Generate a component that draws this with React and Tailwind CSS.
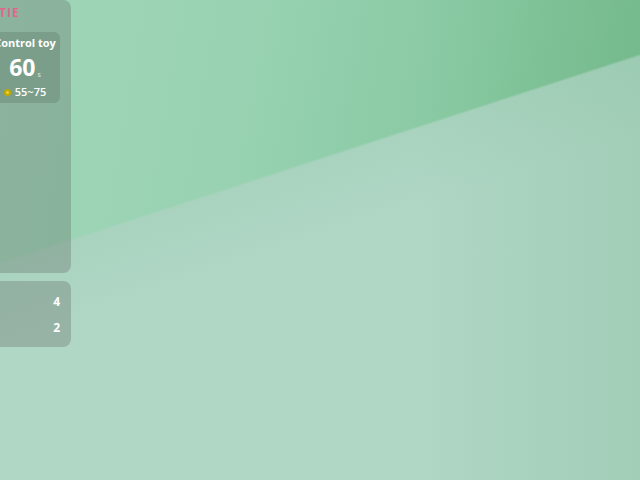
export default function App() {
  return (
    <div
      className="w-[640px] h-[480px] overflow-hidden bg-[image:linear-gradient(90deg,transparent_65%,rgba(110,175,135,0.22)_100%),linear-gradient(162deg,transparent_38%,#a9d3bf_38.4%,#b0d6c5_50%,#b0d6c5_100%),linear-gradient(100deg,#a0d6b9_0%,#98d2b2_35%,#88c9a2_65%,#70b884_100%)]"
      style={{ fontFamily: '"Open Sans", "Noto Sans", sans-serif' }}
    >
      <div className="flex flex-col gap-[8px] -ml-[21px] w-[92px]">
        <div className="h-[273px] rounded-lg bg-[rgba(95,105,100,0.32)] flex flex-col items-end pr-[11px]">
          <div className="w-[81px] -mr-[11px] pt-[5px] h-[32px] pl-[9px]">
            <div className="text-[12px] font-bold leading-[16px] text-[#e0668c] tracking-[1px]">
              TIE
            </div>
          </div>
          <div className="w-[70px] h-[71px] rounded-md bg-[rgba(70,85,78,0.22)] flex flex-col items-center pt-[3px] text-white">
            <div className="text-[11px] font-bold leading-[16px] whitespace-nowrap">Control toy</div>
            <div className="flex items-end leading-none mt-[5px]">
              <span className="text-[23px] font-bold leading-[23px]">60</span>
              <span className="text-[7px] leading-[9px] ml-[2px] text-white/80">s</span>
            </div>
            <div className="flex items-center gap-[4px] mt-[6px]">
              <span className="w-[7px] h-[7px] rounded-full bg-[#e8d630] border-[2px] border-[#c2a800]" />
              <span className="text-[11px] leading-[14px] font-semibold">55~75</span>
            </div>
          </div>
        </div>
        <div className="h-[66px] rounded-lg bg-[rgba(95,105,100,0.32)] flex flex-col items-end pr-[11px] pt-[13px] gap-[11px] text-white">
          <div className="text-[12px] font-bold leading-[15px]">4</div>
          <div className="text-[12px] font-bold leading-[15px]">2</div>
        </div>
      </div>
    </div>
  );
}
